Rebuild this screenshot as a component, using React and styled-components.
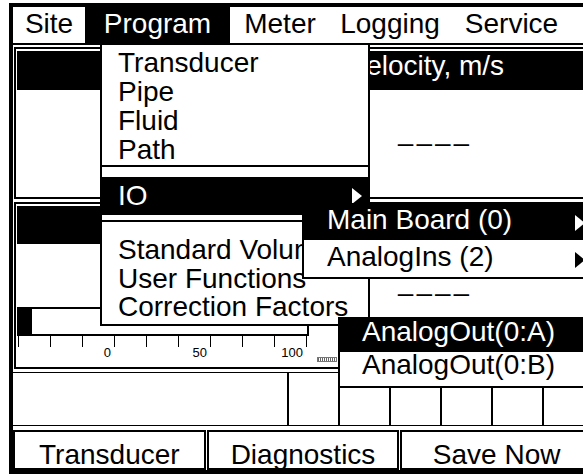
import React from "react";
import styled, { createGlobalStyle } from "styled-components";

const GlobalStyle = createGlobalStyle`
  * { box-sizing: border-box; }
  html, body { margin: 0; padding: 0; background: #fff; overflow: hidden; }
  body { font-family: "Liberation Sans", Arial, Helvetica, sans-serif; color: #000; }
`;

const Screen = styled.div`
  position: relative;
  width: 588px;
  height: 471px;
  margin: 3px 0 0 9px;
  border: 4px solid #000;
  background: #fff;
  display: flex;
  flex-direction: column;
  font-size: 28px;
`;

const MenuBar = styled.div`
  display: flex;
  height: 38px;
  border-bottom: 2px solid #000;
`;

const MenuItem = styled.div`
  width: ${p => p.$w}px;
  height: 36px;
  line-height: 34px;
  text-align: center;
  background: ${p => (p.$active ? "#000" : "#fff")};
  color: ${p => (p.$active ? "#fff" : "#000")};
`;

const Stack = styled.div`
  display: flex;
  flex-direction: column;
  gap: 3px;
  padding: 2px 1px 0;
`;

const Window = styled.div`
  height: ${p => p.$h}px;
  border: 2px solid #000;
  padding: 2px 1px;
  display: flex;
  flex-direction: column;
`;

const WinHeader = styled.div`
  flex: 0 0 ${p => p.$h}px;
  padding-left: 332px;
  background: #000;
  color: #fff;
  line-height: 29px;
  white-space: nowrap;
`;

const WinBody = styled.div`
  flex: 1;
  display: flex;
  flex-direction: column;
`;

const Value = styled.div`
  align-self: flex-end;
  width: 312px;
  padding-left: 4px;
  margin-top: ${p => p.$top}px;
  text-align: center;
  line-height: 29px;
  letter-spacing: 3px;
`;

const Bar = styled.div`
  display: flex;
  width: 292px;
  height: 29px;
  border: 2px solid #000;
`;

const BarFill = styled.div`
  width: ${p => p.$w}px;
  background: #000;
`;

const Ticks = styled.div`
  display: flex;
  height: 11px;
  margin-left: 1px;
`;

const Tick = styled.div`
  flex: 0 0 32px;
  border-left: 1px solid #000;
  &:last-child {
    flex-basis: 1px;
  }
`;

const Labels = styled.div`
  display: flex;
  align-items: flex-start;
  height: 15px;
  margin-left: 1px;
`;

const Label = styled.div`
  width: 96px;
  padding-right: 3px;
  text-align: right;
  font-size: 13px;
  line-height: 12px;
`;

const Indicator = styled.div`
  width: 20px;
  height: 5px;
  margin: 10px 0 0 11px;
  border: 1px solid #777;
  background: repeating-linear-gradient(90deg, #666 0 1px, #fff 1px 2px);
`;

const StatusRow = styled.div`
  display: flex;
  height: 54px;
  margin-top: 3px;
  border-top: 1px solid #000;
  border-bottom: 1px solid #000;
`;

const StatusCell = styled.div`
  flex: 0 0 ${p => p.$w}px;
  border-left: ${p => (p.$first ? 0 : 2)}px solid #000;
`;

const ButtonRow = styled.div`
  display: flex;
  gap: 1px;
  height: 40px;
  margin-top: 4px;
`;

const SoftKey = styled.div`
  flex: 1;
  border: 2px solid #000;
  padding-top: 8px;
  line-height: 29px;
  text-align: center;
`;

const Dropdown = styled.div`
  position: absolute;
  left: 87px;
  top: 38px;
  width: 270px;
  height: 281px;
  padding-top: 3px;
  background: #fff;
  border: 2px solid #000;
  border-top: 0;
`;

const DropItem = styled.div`
  padding-left: 16px;
  line-height: ${p => p.$lh || 29}px;
  margin-top: ${p => p.$mt || 0}px;
  white-space: nowrap;
`;

const Rule = styled.div`
  height: 2px;
  margin-top: ${p => p.$mt}px;
  background: #000;
`;

const HiRow = styled.div`
  display: flex;
  align-items: center;
  justify-content: space-between;
  height: 38px;
  margin-top: 10px;
  padding: 0 6px 0 16px;
  background: #000;
  color: #fff;
  line-height: 38px;
`;

const Arrow = styled.span`
  align-self: center;
  width: 0;
  height: 0;
  border-left: 10px solid ${p => p.$c};
  border-top: 8px solid transparent;
  border-bottom: 8px solid transparent;
`;

const SubMenu = styled.div`
  position: absolute;
  left: ${p => p.$x}px;
  top: ${p => p.$y}px;
  width: ${p => p.$w}px;
  background: #fff;
  border: 2px solid #000;
`;

const SubRow = styled.div`
  display: flex;
  align-items: flex-start;
  justify-content: space-between;
  height: ${p => p.$h}px;
  padding: ${p => p.$pt}px 6px 0 ${p => p.$pl}px;
  line-height: ${p => p.$lh}px;
  white-space: nowrap;
  background: ${p => (p.$active ? "#000" : "#fff")};
  color: ${p => (p.$active ? "#fff" : "#000")};
`;

const menus = [
  { label: "Site", w: 72 },
  { label: "Program", w: 145, active: true },
  { label: "Meter", w: 100 },
  { label: "Logging", w: 120 },
  { label: "Service", w: 123 }
];

const programItems = ["Transducer", "Pipe", "Fluid", "Path"];
const moreItems = ["Standard Volumes", "User Functions", "Correction Factors"];

export default function App() {
  return (
    <>
      <GlobalStyle />
      <Screen>
        <MenuBar>
          {menus.map(m => (
            <MenuItem key={m.label} $w={m.w} $active={m.active}>
              {m.label}
            </MenuItem>
          ))}
        </MenuBar>

        <Stack>
          <Window $h={152}>
            <WinHeader $h={39}>Velocity, m/s</WinHeader>
            <WinBody>
              <Value $top={38}>––––</Value>
            </WinBody>
          </Window>
          <Window $h={167}>
            <WinHeader $h={38} />
            <WinBody>
              <Value $top={34}>––––</Value>
              <Bar>
                <BarFill $w={13} />
              </Bar>
              <Ticks>
                {Array.from({ length: 10 }, (_, i) => (
                  <Tick key={i} />
                ))}
              </Ticks>
              <Labels>
                <Label>0</Label>
                <Label>50</Label>
                <Label>100</Label>
                <Indicator />
              </Labels>
            </WinBody>
          </Window>
        </Stack>

        <StatusRow>
          <StatusCell $w={274} $first />
          {Array.from({ length: 6 }, (_, i) => (
            <StatusCell key={i} $w={51} />
          ))}
        </StatusRow>

        <ButtonRow>
          <SoftKey>Transducer</SoftKey>
          <SoftKey>Diagnostics</SoftKey>
          <SoftKey>Save Now</SoftKey>
        </ButtonRow>

        <Dropdown>
          {programItems.map(t => (
            <DropItem key={t}>{t}</DropItem>
          ))}
          <Rule $mt={1} />
          <HiRow>
            IO
            <Arrow $c="#fff" />
          </HiRow>
          <Rule $mt={5} />
          {moreItems.map((t, i) => (
            <DropItem key={t} $lh={28.5} $mt={i === 0 ? 14 : 0}>
              {t}
            </DropItem>
          ))}
        </Dropdown>

        <SubMenu $x={289} $y={196} $w={291}>
          <SubRow $active $h={35} $pt={0} $pl={23} $lh={29}>
            Main Board (0)
            <Arrow $c="#fff" />
          </SubRow>
          <SubRow $h={37} $pt={2} $pl={23} $lh={29}>
            AnalogIns (2)
            <Arrow $c="#000" />
          </SubRow>
        </SubMenu>

        <SubMenu $x={325} $y={310} $w={255}>
          <SubRow $active $h={33} $pt={0} $pl={22} $lh={26}>
            AnalogOut(0:A)
          </SubRow>
          <SubRow $h={34} $pt={0} $pl={22} $lh={26}>
            AnalogOut(0:B)
          </SubRow>
        </SubMenu>
      </Screen>
    </>
  );
}
